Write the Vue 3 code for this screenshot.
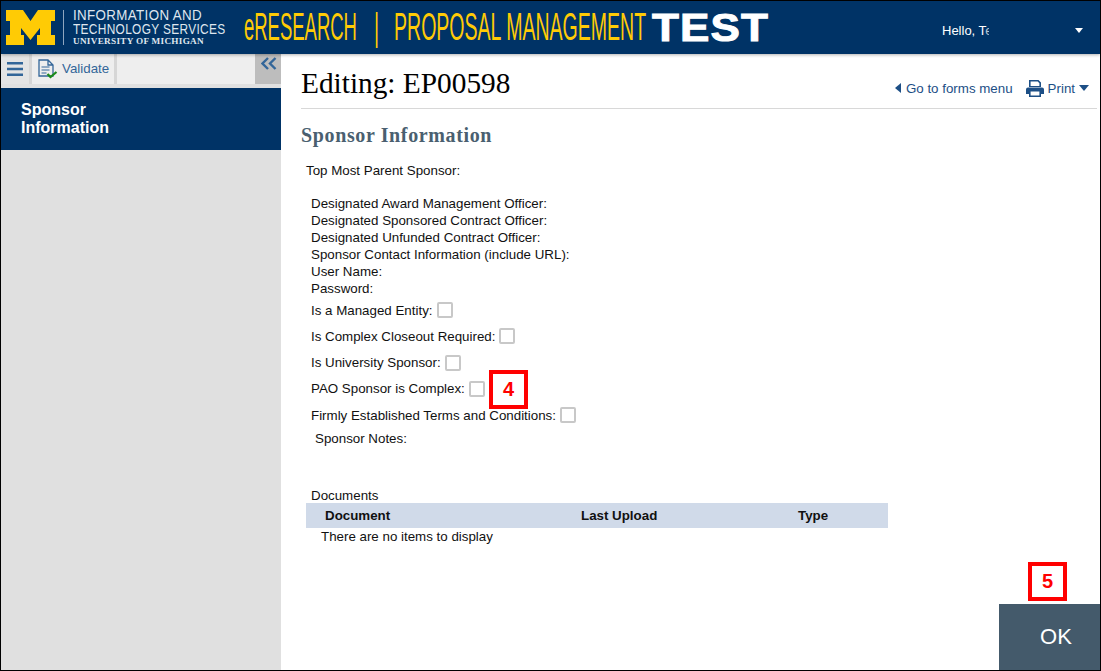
<template>
  <div class="page">
    <header class="top">
      <svg class="logo" width="49" height="35" viewBox="0 0 49 35">
        <path fill="#ffcb05" d="M0 0H17L24.500 11 32 0H49V11H45V25H49V35H31V25H34V18L24.500 30 15 18V25H18V35H0V25H4V11H0Z" />
      </svg>
      <div class="logo-rule"></div>
      <div class="its">
        <div class="its-line">INFORMATION AND</div>
        <div class="its-line its-second">TECHNOLOGY SERVICES</div>
        <div class="its-um">UNIVERSITY OF MICHIGAN</div>
      </div>
      <div class="app-name">
        <div class="app-part part-a"><span>eRESEARCH</span></div>
        <div class="app-part part-b"><span>|</span></div>
        <div class="app-part part-c"><span>PROPOSAL MANAGEMENT</span></div>
      </div>
      <div class="test">TEST</div>
      <div class="hello">Hello, T<span class="hello-fade">e</span></div>
      <span class="caret-white"></span>
    </header>

    <div class="body">
      <aside class="side">
        <div class="toolbar">
          <button class="tool menu" aria-label="Menu">
            <svg width="16" height="14" viewBox="0 0 16 14"><path fill="#336699" d="M0 0h16v2.600H0zM0 5.700h16v2.600H0zM0 11.400h16V14H0z" /></svg>
          </button>
          <button class="tool validate">
            <svg width="20" height="20" viewBox="0 0 20 20">
              <path fill="none" stroke="#336699" stroke-width="1.300" d="M1 1h9l5 5v11H1zM10 1v5h5" />
              <path fill="none" stroke="#336699" stroke-width="1.200" d="M3.500 8h8M3.500 11h8M3.500 14h5" />
              <path fill="none" stroke="#1a8a1a" stroke-width="2.200" d="M9.500 15l3 3 6-5" />
            </svg>
            <span class="validate-text">Validate</span>
          </button>
          <div class="tool spacer"></div>
          <button class="collapse" aria-label="Collapse">
            <svg width="16" height="13" viewBox="0 0 16 13"><path fill="none" stroke="#336699" stroke-width="2.400" d="M7 1L1.500 6.500 7 12M14.500 1L9 6.500l5.500 5.500" /></svg>
          </button>
        </div>
        <div class="nav-item">Sponsor<br />Information</div>
      </aside>

      <main class="main">
        <div class="title-row">
          <h1>Editing: EP00598</h1>
          <div class="actions">
            <a class="act"><span class="back"></span>Go to forms menu</a>
            <a class="act print">
              <svg width="18" height="17" viewBox="0 0 18 17">
                <path fill="#1d4f86" fill-rule="evenodd" d="M3 0h9.500L15 2.500V7H3zM4.600 1.500V6h8.800V3.200L11.700 1.500zM2 7.500h14a2 2 0 0 1 2 2V14h-3v3H3v-3H0V9.500a2 2 0 0 1 2-2zM4.600 11.500v4h8.800v-4z" />
              </svg>
              Print<span class="down"></span>
            </a>
          </div>
        </div>

        <h2>Sponsor Information</h2>
        <div class="parent">Top Most Parent Sponsor:</div>

        <div class="fields">
          <div v-for="f in fields" :key="f" class="field">{{ f }}</div>
        </div>

        <div class="checks">
          <div v-for="c in checks" :key="c" class="check">
            <span>{{ c }}:</span><span class="box"></span>
          </div>
        </div>
        <div class="notes">Sponsor Notes:</div>

        <div class="docs">
          <div class="docs-label">Documents</div>
          <div class="docs-head">
            <span class="col-doc">Document</span>
            <span class="col-up">Last Upload</span>
            <span>Type</span>
          </div>
          <div class="docs-empty">There are no items to display</div>
        </div>

        <button class="ok">OK</button>
      </main>
    </div>

    <div class="badge badge-4">4</div>
    <div class="badge badge-5">5</div>
  </div>
</template>

<script setup>
const fields = [
  'Designated Award Management Officer:',
  'Designated Sponsored Contract Officer:',
  'Designated Unfunded Contract Officer:',
  'Sponsor Contact Information (include URL):',
  'User Name:',
  'Password:'
]

const checks = [
  'Is a Managed Entity',
  'Is Complex Closeout Required',
  'Is University Sponsor',
  'PAO Sponsor is Complex',
  'Firmly Established Terms and Conditions'
]
</script>

<style>
html, body {
  margin: 0;
  background: #fff;
}
</style>

<style scoped>
.page {
  position: relative;
  box-sizing: border-box;
  width: 1101px;
  height: 671px;
  border: 1px solid #000;
  display: flex;
  flex-direction: column;
  overflow: hidden;
  font-family: "Liberation Sans", Arial, sans-serif;
  font-size: 13.330px;
  color: #111;
}

.top {
  flex: 0 0 53px;
  background: #003366;
  display: flex;
  align-items: center;
  box-shadow: 0 1px 3px rgba(0, 0, 0, .3);
  z-index: 1;
  color: #fff;
}
.logo {
  margin-left: 5px;
  flex: none;
}
.logo-rule {
  width: 1px;
  height: 35px;
  margin-left: 8px;
  background: #8fa6bf;
}
.its {
  margin-left: 9px;
  width: 160px;
  color: #dfe6ee;
}
.its-line {
  font-size: 14.500px;
  line-height: 14px;
  white-space: nowrap;
  transform: scaleX(.92);
  transform-origin: left;
  letter-spacing: .4px;
}
.its-second {
  transform: scaleX(.82);
}
.its-um {
  font-family: "Liberation Serif", serif;
  font-size: 9.200px;
  font-weight: bold;
  line-height: 11px;
  letter-spacing: .3px;
  white-space: nowrap;
}
.app-name {
  margin-left: 11px;
  width: 408px;
  display: flex;
  color: #ffcb05;
  font-size: 38px;
  white-space: nowrap;
}
.app-part {
  flex: none;
}
.app-part span {
  display: inline-block;
  transform-origin: left;
}
.part-a {
  width: 130px;
}
.part-a span {
  transform: scaleX(.486);
}
.part-b {
  width: 20px;
}
.part-b span {
  transform: scaleX(.516);
}
.part-c {
  width: 258px;
}
.part-c span {
  transform: scaleX(.514);
}
.test {
  font-size: 39px;
  font-weight: bold;
  letter-spacing: 1px;
  width: 117px;
  transform: scaleX(1.13);
  transform-origin: left;
  -webkit-text-stroke: 1px #fff;
}
.hello {
  margin-left: 173px;
  width: 47px;
  overflow: hidden;
  padding-top: 5px;
  font-size: 13px;
  white-space: nowrap;
}
.hello-fade {
  opacity: .7;
}
.caret-white {
  margin-top: 5px;
  margin-left: 86px;
  border-left: 4.500px solid transparent;
  border-right: 4.500px solid transparent;
  border-top: 5px solid #fff;
}

.body {
  flex: 1;
  display: flex;
  min-height: 0;
}

.side {
  flex: 0 0 280px;
  background: #e0e0e0;
}
.toolbar {
  height: 30px;
  display: flex;
  background: #bdbdbd;
}
.tool {
  height: 30px;
  border: 0;
  padding: 0;
  background: #eee;
  border-right: 3px solid #d6d6d6;
  display: flex;
  align-items: center;
  box-sizing: border-box;
  font: inherit;
}
.menu {
  width: 31px;
  justify-content: center;
  background: #e4e4e4;
}
.validate {
  width: 85px;
  padding-left: 6px;
  gap: 4px;
  color: #336699;
  font-size: 13.330px;
}
.validate-text {
  margin-bottom: 2px;
}
.spacer {
  width: 138px;
  border-right: 0;
}
.collapse {
  width: 26px;
  padding: 0 0 0 1px;
  height: 22px;
  border: 0;
  background: transparent;
}
.nav-item {
  margin-top: 4px;
  height: 62px;
  box-sizing: border-box;
  padding: 13px 0 0 20px;
  background: #003366;
  color: #fff;
  font-size: 16px;
  font-weight: bold;
  line-height: 18px;
}

.main {
  flex: 1;
  position: relative;
  padding: 0 3px 0 20px;
  background: #fff;
}
.title-row {
  height: 55px;
  box-sizing: border-box;
  border-bottom: 1px solid #d8d8d8;
  display: flex;
  justify-content: space-between;
  align-items: center;
}
h1 {
  margin: 4px 0 0;
  font-family: "Liberation Serif", serif;
  font-size: 29.330px;
  font-weight: normal;
  color: #000;
}
.actions {
  display: flex;
  align-items: center;
  gap: 13px;
  margin-top: 14px;
  padding-right: 8px;
  color: #1d4f86;
}
.act {
  display: flex;
  align-items: center;
}
.back {
  margin-right: 5px;
  border-top: 5px solid transparent;
  border-bottom: 5px solid transparent;
  border-right: 6px solid #1d4f86;
}
.print svg {
  margin-right: 4px;
}
.down {
  margin-left: 4px;
  border-left: 5px solid transparent;
  border-right: 5px solid transparent;
  border-top: 6px solid #1d4f86;
}
h2 {
  margin: 14px 0 0;
  font-family: "Liberation Serif", serif;
  font-size: 20px;
  line-height: 24px;
  font-weight: bold;
  letter-spacing: .63px;
  color: #4a5f70;
}
.parent {
  margin: 15px 0 0 5px;
  line-height: 17px;
}
.fields {
  margin: 16px 0 0 10px;
}
.field {
  line-height: 17px;
}
.checks {
  margin: 0 0 0 10px;
}
.check {
  height: 26.250px;
  display: flex;
  align-items: center;
  gap: 4px;
}
.box {
  box-sizing: border-box;
  width: 16px;
  height: 16px;
  border: 2px solid #c8c8c8;
  border-radius: 2px;
}
.notes {
  margin: 2px 0 0 14px;
  line-height: 17px;
}
.docs {
  margin: 41px 0 0 5px;
  width: 582px;
}
.docs-label {
  margin-left: 5px;
  line-height: 15px;
}
.docs-head {
  height: 25px;
  background: #d0dae9;
  display: flex;
  align-items: center;
  font-weight: bold;
  padding-left: 19px;
}
.col-doc {
  width: 256px;
}
.col-up {
  width: 217px;
}
.docs-empty {
  margin-left: 15px;
  line-height: 17px;
}
.ok {
  position: absolute;
  right: 0;
  bottom: 0;
  width: 101px;
  height: 66px;
  padding-left: 19px;
  border: 0;
  background: #445a6b;
  color: #fff;
  font: inherit;
  font-size: 22px;
}

.badge {
  position: absolute;
  box-sizing: border-box;
  width: 39px;
  height: 39px;
  border: 4px solid #f00;
  background: #fff;
  color: #f00;
  font-size: 20px;
  font-weight: bold;
  display: flex;
  align-items: center;
  justify-content: center;
}
.badge-4 {
  left: 488px;
  top: 369px;
}
.badge-5 {
  left: 1027px;
  top: 561px;
}
</style>
